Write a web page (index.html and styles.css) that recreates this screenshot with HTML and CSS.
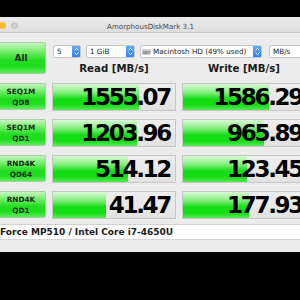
FILE: index.html
```html
<!DOCTYPE html>
<html lang="en">
<head>
  <meta charset="UTF-8">
  <title>AmorphousDiskMark 3.1</title>
  <link rel="stylesheet" href="styles.css">
</head>
<body>
  <div class="window">
    <div class="titlebar">
      <div class="lights">
        <span class="light red"></span>
        <span class="light yellow"></span>
        <span class="light gray"></span>
      </div>
      <div class="title">AmorphousDiskMark 3.1</div>
      <div></div>
    </div>
    <div class="content">
      <div class="top">
        <div class="btn all">All</div>
        <div class="controls">
          <div class="selects">
            <div class="select s-count"><span class="label">5</span><span class="stepper"><svg width="9" height="13" viewBox="0 0 9 13"><path d="M2.6 5.2 L4.5 3.4 L6.4 5.2 M2.6 7.8 L4.5 9.6 L6.4 7.8" fill="none" stroke="#fff" stroke-width="1"/></svg></span></div>
            <div class="select s-size"><span class="label">1 GiB</span><span class="stepper"><svg width="9" height="13" viewBox="0 0 9 13"><path d="M2.6 5.2 L4.5 3.4 L6.4 5.2 M2.6 7.8 L4.5 9.6 L6.4 7.8" fill="none" stroke="#fff" stroke-width="1"/></svg></span></div>
            <div class="select s-disk">
              <svg class="disk" width="9" height="9" viewBox="0 0 9 9"><rect x="0.5" y="2" width="8" height="5.5" rx="1" fill="#9a9a9a"/><rect x="0.5" y="2" width="8" height="2" rx="1" fill="#cfcfcf"/><circle cx="7" cy="6" r="0.6" fill="#eee"/></svg>
              <span class="label">Macintosh HD (49% used)</span><span class="stepper"><svg width="9" height="13" viewBox="0 0 9 13"><path d="M2.6 5.2 L4.5 3.4 L6.4 5.2 M2.6 7.8 L4.5 9.6 L6.4 7.8" fill="none" stroke="#fff" stroke-width="1"/></svg></span>
            </div>
            <div class="select s-unit"><span class="label">MB/s</span><span class="stepper"><svg width="9" height="13" viewBox="0 0 9 13"><path d="M2.6 5.2 L4.5 3.4 L6.4 5.2 M2.6 7.8 L4.5 9.6 L6.4 7.8" fill="none" stroke="#fff" stroke-width="1"/></svg></span></div>
          </div>
          <div class="heads">
            <div class="head">Read [MB/s]</div>
            <div class="head">Write [MB/s]</div>
          </div>
        </div>
      </div>

      <div class="rows">
        <div class="row">
          <div class="btn test">SEQ1M<br>QD8</div>
          <div class="value"><div class="bar" style="width: 70.5%"></div><div class="num">1555.07</div></div>
          <div class="value"><div class="bar" style="width: 69.7%"></div><div class="num">1586.29</div></div>
        </div>
        <div class="row">
          <div class="btn test">SEQ1M<br>QD1</div>
          <div class="value"><div class="bar" style="width: 68.9%"></div><div class="num">1203.96</div></div>
          <div class="value"><div class="bar" style="width: 65.6%"></div><div class="num">965.89</div></div>
        </div>
        <div class="row">
          <div class="btn test">RND4K<br>QD64</div>
          <div class="value"><div class="bar" style="width: 61.5%"></div><div class="num">514.12</div></div>
          <div class="value"><div class="bar" style="width: 51.6%"></div><div class="num">123.45</div></div>
        </div>
        <div class="row">
          <div class="btn test">RND4K<br>QD1</div>
          <div class="value"><div class="bar" style="width: 43.4%"></div><div class="num">41.47</div></div>
          <div class="value"><div class="bar" style="width: 53.3%"></div><div class="num">177.93</div></div>
        </div>
      </div>

      <div class="info">Force MP510 / Intel Core i7-4650U</div>
    </div>
  </div>
</body>
</html>
```

FILE: styles.css
```css
body {
  margin: 0;
  background: #000;
  height: 300px;
  overflow: hidden;
  font-family: 'DejaVu Sans', sans-serif;
}
.window {
  margin: 17px 0 0 -17px;
  width: 335px;
  height: 235px;
  background: #ececec;
}
.titlebar {
  display: grid;
  grid-template-columns: 1fr auto 1fr;
  align-items: center;
  height: 15px;
  background: linear-gradient(#ebebeb, #dedede);
  border-bottom: 1px solid #c6c6c6;
}
.lights {
  display: flex;
  gap: 5px;
  padding-left: 4px;
  padding-top: 2px;
}
.light {
  width: 7px;
  height: 7px;
  border-radius: 50%;
}
.light.red { background: #fc5f57; }
.light.yellow { background: #fdbc2e; }
.light.gray { background: #d0d0d0; border: 0.5px solid #c0c0c0; box-sizing: border-box; }
.title {
  font-size: 7.1px;
  color: #4a4a4a;
  padding-top: 3px;
}
.content {
  padding: 9px 0 0 13px;
}
.top {
  display: flex;
  gap: 6px;
}
.btn {
  box-sizing: border-box;
  width: 50px;
  border: 1px solid #a9cfa6;
  border-radius: 2px;
  background: linear-gradient(#c8f6c3 0%, #6fec66 30%, #22dc22 58%, #1fdd1f 78%, #5ded5a 100%);
  color: #1b2a1b;
  font-weight: bold;
  display: flex;
  align-items: center;
  justify-content: center;
  text-align: center;
}
.all {
  height: 32px;
  font-size: 9px;
}
.test {
  font-size: 7.3px;
  line-height: 11px;
}
.controls {
  display: flex;
  flex-direction: column;
}
.selects {
  display: flex;
  margin-top: 3px;
  margin-left: 1px;
  height: 13px;
}
.select {
  box-sizing: border-box;
  display: flex;
  align-items: center;
  height: 13px;
  background: #fff;
  border: 1px solid #c8c8c8;
  border-radius: 2px;
  font-size: 7.2px;
  color: #222;
  overflow: hidden;
}
.select .label {
  flex: 1;
  padding-left: 3px;
  white-space: nowrap;
}
.stepper {
  display: flex;
  width: 9px;
  height: 13px;
  margin-right: -1px;
  background: linear-gradient(#62aafb, #2b7ff4);
  border-radius: 2px;
}
.s-count { width: 28px; margin-right: 5px; }
.s-size { width: 49px; margin-right: 5px; }
.s-disk { width: 122px; margin-right: 7px; }
.s-unit { width: 40px; }
.s-disk .label { padding-left: 2px; }
.disk { margin-left: 1px; }
.heads {
  display: grid;
  grid-template-columns: 124px 124px;
  column-gap: 6px;
  margin-top: 4px;
}
.head {
  text-align: center;
  font-weight: bold;
  font-size: 10.2px;
  line-height: 14px;
  color: #1a1a1a;
}
.rows {
  display: flex;
  flex-direction: column;
  gap: 8px;
  margin-top: 7px;
}
.row {
  display: grid;
  grid-template-columns: 50px 124px 126px;
  column-gap: 6px;
  height: 28px;
}
.row .test {
  height: 27px;
}
.value {
  box-sizing: border-box;
  display: grid;
  border: 1px solid #c6c6c6;
  background: linear-gradient(#eeeeee, #e2e2e2);
}
.bar, .num {
  grid-area: 1 / 1;
}
.bar {
  background: linear-gradient(#d9f8d6 0%, #8cef86 30%, #16dc16 58%, #12dc12 80%, #55ea55 100%);
}
.num {
  text-align: right;
  font-weight: bold;
  font-size: 23px;
  letter-spacing: -2.3px;
  line-height: 26px;
  padding-right: 5px;
  color: #000;
}
.info {
  margin: 5px 0 0 -13px;
  height: 16px;
  box-sizing: border-box;
  background: #fff;
  border-top: 1px solid #d2d2d2;
  border-bottom: 1px solid #d6d6d6;
  padding-left: 17px;
  font-size: 9px;
  font-weight: bold;
  line-height: 14px;
  color: #1a1a1a;
  white-space: nowrap;
}
```
